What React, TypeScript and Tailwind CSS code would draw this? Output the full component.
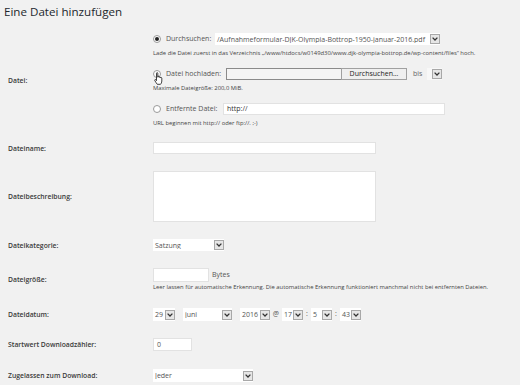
import React from "react";

const Chevron = () => (
  <svg width="6" height="4" viewBox="0 0 6 4" className="block">
    <path d="M0.6 0.6 L3 3 L5.4 0.6" fill="none" stroke="#333" strokeWidth="1.3" />
  </svg>
);

const ArrowBox = () => (
  <div className="w-[10px] h-[10px] border border-[#a8a8a8] bg-[#e6e6e6] flex items-center justify-center shrink-0">
    <Chevron />
  </div>
);

function Select({ w, text, h = "h-[13px]" }: { w: string; text: string; h?: string }) {
  return (
    <div className={`${w} ${h} bg-white flex items-center shrink-0`}>
      <span className="flex-1 pl-[2px] text-[7px] leading-[7px] text-[#555] whitespace-nowrap overflow-hidden">{text}</span>
      <ArrowBox />
    </div>
  );
}

const Radio = ({ checked = false }: { checked?: boolean }) => (
  <div className="w-[8px] h-[8px] rounded-full border border-[#9a9a9a] bg-white flex items-center justify-center shrink-0">
    {checked && <div className="w-[4px] h-[4px] rounded-full bg-[#222]" />}
  </div>
);

const Hand = () => (
  <svg width="10" height="13" viewBox="0 0 10 13" className="absolute left-[1px] top-[2px]">
    <path
      d="M2.5 1.2 C2.5 0.5 3.8 0.5 3.8 1.2 L3.8 5.2 L4 4.6 C4 4 5.2 4 5.2 4.7 L5.3 5.4 C5.4 4.8 6.5 4.8 6.5 5.5 L6.6 6 C6.8 5.4 7.8 5.5 7.8 6.2 L7.8 9 C7.8 10.5 7 11.8 6.5 12.3 L3.3 12.3 C2.6 11.3 1.5 10 0.8 8.6 C0.4 7.8 1.2 7.2 1.8 7.8 L2.5 8.6 Z"
      fill="#fff"
      stroke="#111"
      strokeWidth="0.8"
      strokeLinejoin="round"
    />
  </svg>
);

const Help = ({ children }: { children: React.ReactNode }) => (
  <div className="text-[5.85px] leading-[7px] text-[#444] whitespace-nowrap">{children}</div>
);

function Row({ label, mt, children }: { label: string; mt: string; children: React.ReactNode }) {
  return (
    <div className={`flex items-center pl-[8px] ${mt}`}>
      <div className="w-[145px] shrink-0 text-[6.8px] leading-[9px] font-semibold text-[#3a3a3a]">{label}</div>
      <div className="flex-1">{children}</div>
    </div>
  );
}

export default function App() {
  return (
    <div
      className="w-[520px] h-[385px] bg-[#f1f1f1] overflow-hidden text-[#444]"
      style={{ fontFamily: "'Open Sans', 'DejaVu Sans', sans-serif" }}
    >
      <h1 className="px-[4px] pt-[4px] text-[11.6px] leading-[16px] font-normal text-[#23282d]">Eine Datei hinzufügen</h1>

      <Row label="Datei:" mt="mt-[13px]">
        <div className="flex flex-col gap-[11px]">
          <div>
            <div className="flex items-center h-[12px]">
              <Radio checked />
              <span className="ml-[5px] w-[49px] text-[7px] text-[#555]">Durchsuchen:</span>
              <Select w="w-[225px]" h="h-[12px]" text="/Aufnahmeformular-DJK-Olympia-Bottrop-1950-januar-2016.pdf" />
            </div>
            <div className="mt-[5px]">
              <Help>Lade die Datei zuerst in das Verzeichnis „/www/htdocs/w0149d30/www.djk-olympia-bottrop.de/wp-content/files“ hoch.</Help>
            </div>
          </div>
          <div>
            <div className="flex items-center h-[12px]">
              <div className="relative">
                <Radio />
                <Hand />
              </div>
              <span className="ml-[5px] w-[60px] text-[7px] text-[#555]">Datei hochladen:</span>
              <div className="w-[115px] h-[12px] border border-[#8a8a8a] border-r-0 bg-[#f4f4f4]" />
              <div className="w-[66px] h-[12px] border border-[#a0a0a0] bg-[#efefef] text-[7px] leading-[10px] text-[#222] text-center">Durchsuchen...</div>
              <span className="ml-[6px] text-[7px] text-[#666]">bis</span>
              <div className="ml-[5px] w-[15px] h-[12px] bg-[#f8f8f8] flex items-center justify-end">
                <ArrowBox />
              </div>
            </div>
            <div className="mt-[5px]">
              <Help>Maximale Dateigröße: 200,0 MiB.</Help>
            </div>
          </div>
          <div>
            <div className="flex items-center h-[12px]">
              <Radio />
              <span className="ml-[5px] w-[57px] text-[7px] text-[#555]">Entfernte Datei:</span>
              <div className="w-[222px] h-[12px] bg-white border border-[#e2e2e2] text-[7px] leading-[10px] pl-[3px] text-[#333]">http://</div>
            </div>
            <div className="mt-[5px]">
              <Help>URL beginnen mit http:// oder ftp://. ;-)</Help>
            </div>
          </div>
        </div>
      </Row>

      <Row label="Dateiname:" mt="mt-[15px]">
        <div className="w-[223px] h-[12px] bg-white border border-[#e2e2e2]" />
      </Row>

      <Row label="Dateibeschreibung:" mt="mt-[17px]">
        <div className="w-[223px] h-[51px] bg-white border border-[#e2e2e2]" />
      </Row>

      <Row label="Dateikategorie:" mt="mt-[17px]">
        <Select w="w-[71px]" h="h-[12px]" text="Satzung" />
      </Row>

      <Row label="Dateigröße:" mt="mt-[17px]">
        <div className="flex items-center h-[14px]">
          <div className="w-[56px] h-[14px] bg-white border border-[#e2e2e2]" />
          <span className="ml-[3px] text-[7px] text-[#555]">Bytes</span>
        </div>
        <div className="mt-[2px]">
          <Help>Leer lassen für automatische Erkennung. Die automatische Erkennung funktioniert manchmal nicht bei entfernten Dateien.</Help>
        </div>
      </Row>

      <Row label="Dateidatum:" mt="mt-[17px]">
        <div className="flex items-center h-[13px] text-[7px] text-[#555]">
          <Select w="w-[22px]" text="29" />
          <div className="w-[8px]" />
          <Select w="w-[49px]" text="juni" />
          <div className="w-[8px]" />
          <Select w="w-[30px]" text="2016" />
          <span className="w-[12px] text-center">@</span>
          <Select w="w-[21px]" text="17" />
          <span className="w-[8px] text-center">:</span>
          <Select w="w-[21px]" text="5" />
          <span className="w-[8px] text-center">:</span>
          <Select w="w-[21px]" text="43" />
        </div>
      </Row>

      <Row label="Startwert Downloadzähler:" mt="mt-[17px]">
        <div className="w-[39px] h-[13px] bg-white border border-[#e2e2e2] text-[7px] leading-[11px] pl-[3px] text-[#555]">0</div>
      </Row>

      <Row label="Zugelassen zum Download:" mt="mt-[18px]">
        <Select w="w-[100px]" text="Jeder" />
      </Row>
    </div>
  );
}
